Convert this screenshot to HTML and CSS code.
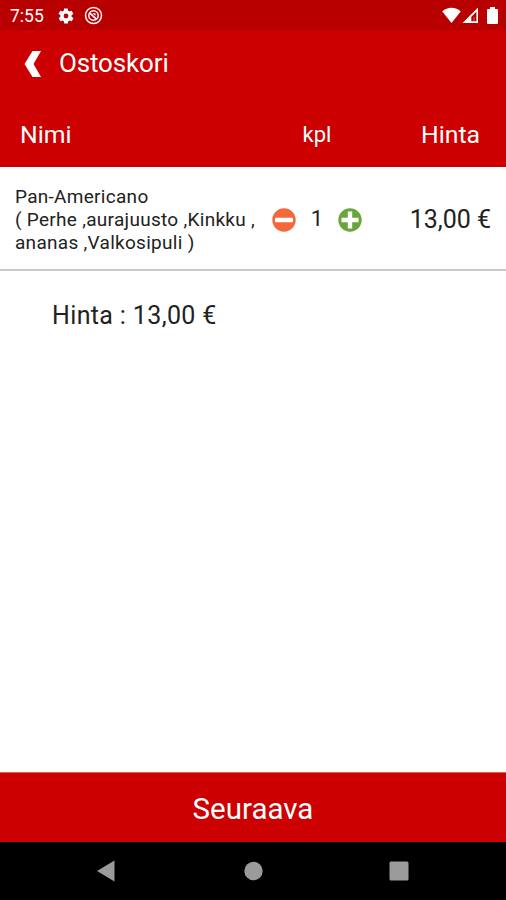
FILE: index.html
```html
<!DOCTYPE html>
<html lang="fi">
<head>
    <meta charset="UTF-8">
    <meta name="viewport" content="width=device-width, initial-scale=1.0">
    <title>Ostoskori</title>
    <link rel="stylesheet" href="styles.css">
</head>
<body>
    <div class="screen">
        <div class="status-bar">
            <span class="time">7:55</span>
            <svg class="icon-gear" width="18" height="18" viewBox="0 0 24 24"><path fill="#fff" fill-rule="evenodd" d="M19.4 13c0-.3.1-.6.1-1s0-.7-.1-1l2.1-1.600c.2-.2.2-.4.1-.6l-2-3.500c-.1-.2-.4-.3-.6-.2l-2.500 1c-.5-.4-1.100-.7-1.700-1l-.4-2.600c0-.3-.2-.5-.5-.5h-4c-.2 0-.5.2-.5.4l-.4 2.700c-.6.2-1.100.6-1.700 1l-2.500-1c-.2-.1-.5 0-.6.2l-2 3.500c-.1.2-.1.4.1.6L4.600 11c0 .3-.1.6-.1 1s0 .7.1 1l-2.100 1.600c-.2.2-.2.4-.1.6l2 3.500c.1.2.4.3.6.2l2.500-1c.5.4 1.100.7 1.700 1l.4 2.600c0 .3.2.5.5.5h4c.2 0 .5-.2.5-.4l.4-2.700c.6-.2 1.100-.6 1.700-1l2.500 1c.2.1.5 0 .6-.2l2-3.500c.1-.2.1-.4-.1-.6zM12 15.200a3.200 3.200 0 1 1 0-6.400 3.200 3.200 0 0 1 0 6.400z"/></svg>
            <svg class="icon-target" width="19" height="19" viewBox="0 0 19 19" fill="none" stroke="#fff"><circle cx="9.500" cy="9.500" r="8" stroke-width="1.500"/><circle cx="9.500" cy="9.500" r="4.700" stroke-width="1.500"/><path d="M5.800 7.200l6.700 6" stroke-width="1.700"/><path d="M8.300 7.200h3.200v2.600z" fill="#fff" stroke="none"/></svg>
            <div class="signals">
                <svg width="19" height="17" viewBox="0 0 19 17"><path fill="#fff" d="M9.500 16L.3 4.400C2.800 2 6 .8 9.500.8s6.700 1.200 9.200 3.600z"/></svg>
                <svg width="17" height="17" viewBox="0 0 17 17"><path fill="#fff" fill-rule="evenodd" d="M.5 16L16 .5V16zM9.300 14.300h5.100V4.700L9.300 9.800z"/><path fill="#fff" d="M11.200 14.500v-3.500l1.600-1.600v5.100z" opacity=".25"/></svg>
                <svg class="battery" width="11" height="17" viewBox="0 0 11 17"><path fill="#fff" d="M3 0h5v2h2q1 0 1 1v13q0 1-1 1H1q-1 0-1-1V3q0-1 1-1h2z"/></svg>
            </div>
        </div>

        <div class="toolbar">
            <svg class="back" width="18" height="26" viewBox="0 0 18 26"><path fill="#fff" d="M8.500 0H17L9.500 13 17 26H8.500L.5 13z"/></svg>
            <h1>Ostoskori</h1>
        </div>

        <div class="table-head">
            <span class="col-name">Nimi</span>
            <span class="col-count">kpl</span>
            <span class="col-price">Hinta</span>
        </div>

        <div class="cart-row">
            <div class="product">Pan-Americano<br>( Perhe ,aurajuusto ,Kinkku ,<br>ananas ,Valkosipuli )</div>
            <div class="counter">
                <svg width="24" height="24" viewBox="0 0 24 24"><circle cx="12" cy="12" r="11.700" fill="#f4683c"/><rect x="3" y="9.800" width="18" height="4.400" rx="1" fill="#fff"/></svg>
                <span class="count">1</span>
                <svg width="24" height="24" viewBox="0 0 24 24"><circle cx="12" cy="12" r="11.700" fill="#68a63a"/><path d="M12 3.500v17M3.500 12h17" stroke="#fff" stroke-width="4.400"/></svg>
            </div>
            <div class="price">13,00 €</div>
        </div>

        <div class="total">Hinta : 13,00 €</div>

        <button class="next">Seuraava</button>

        <div class="nav-bar">
            <svg width="20" height="22" viewBox="0 0 20 22"><path fill="#9b9b9b" d="M18.500 .5v21L1 11z"/></svg>
            <svg width="20" height="20" viewBox="0 0 20 20"><circle cx="10.500" cy="10" r="9.200" fill="#9b9b9b"/></svg>
            <svg width="20" height="20" viewBox="0 0 20 20"><rect x=".5" y=".5" width="19" height="19" rx="1.500" fill="#9b9b9b"/></svg>
        </div>
    </div>
</body>
</html>
```
FILE: styles.css
```css
* {
    box-sizing: border-box;
}

body {
    margin: 0;
    font-family: Roboto, sans-serif;
    background: #fff;
    color: #222;
}

svg {
    display: block;
    flex: none;
}

.screen {
    display: flex;
    flex-direction: column;
    height: 900px;
}

.status-bar {
    display: flex;
    align-items: center;
    height: 30px;
    padding: 1px 8px 0 10px;
    background: #b80000;
    color: #fff;
}

.time {
    width: 47px;
    font-size: 17.5px;
}

.icon-target {
    margin-left: 9px;
}

.signals {
    display: flex;
    gap: 1px;
    margin-left: auto;
}

.battery {
    margin-left: 7px;
}

.toolbar {
    display: flex;
    align-items: center;
    height: 66px;
    padding: 2px 0 0 24px;
    background: #cc0000;
    color: #fff;
}

.toolbar h1 {
    margin: -3px 0 0 17px;
    font-size: 26px;
    font-weight: 400;
    letter-spacing: -0.15px;
}

.table-head {
    display: grid;
    grid-template-columns: 262px 110px 1fr;
    align-items: center;
    height: 71px;
    padding-top: 6px;
    background: #cc0000;
    color: #fff;
    font-size: 24.8px;
}

.col-name {
    padding-left: 20px;
}

.col-count {
    text-align: center;
    font-size: 22px;
}

.col-price {
    padding-right: 26px;
    text-align: right;
}

.cart-row {
    display: grid;
    grid-template-columns: 272px 90px 1fr;
    align-items: center;
    height: 104px;
    border-bottom: 2px solid #c8c8c8;
}

.product {
    padding: 3px 0 0 15px;
    font-size: 19px;
    line-height: 23px;
    letter-spacing: 0.29px;
    white-space: nowrap;
}

.counter {
    display: flex;
    align-items: center;
    justify-content: space-between;
    padding-top: 3px;
}

.count {
    padding-bottom: 3px;
    font-size: 22px;
}

.price {
    padding: 3px 15px 0 0;
    font-size: 25px;
    text-align: right;
}

.total {
    padding: 30px 0 0 52px;
    font-size: 25px;
    line-height: 30px;
    letter-spacing: 0.36px;
}

.next {
    height: 70px;
    margin-top: auto;
    padding: 3px 0 0;
    border: 0;
    border-top: 1px solid #d86464;
    background: #cc0000;
    color: #fff;
    font-family: inherit;
    font-size: 29.5px;
}

.nav-bar {
    display: flex;
    justify-content: space-between;
    align-items: center;
    height: 58px;
    padding: 0 97px 0 96px;
    background: #000;
}
```
